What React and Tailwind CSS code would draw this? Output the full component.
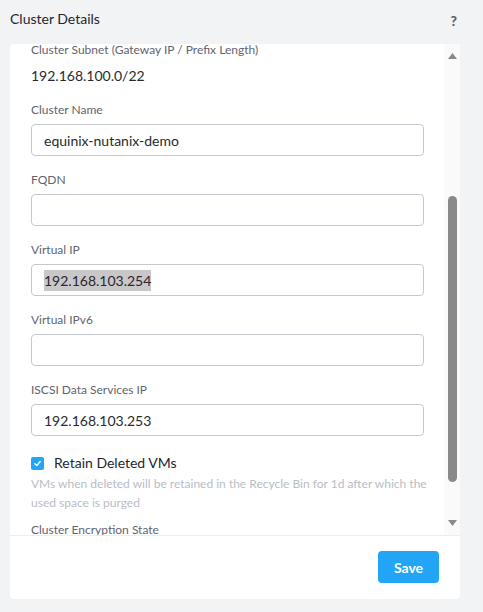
import React from "react";

const font = { fontFamily: "Lato, 'Open Sans', sans-serif" };

function Field({ label, value, selected }) {
  return (
    <div className="flex flex-col">
      <div className="h-[16px] leading-[16px] text-[12px] text-[#5f6470]">{label}</div>
      <div className="mt-[6px] h-[32px] w-[393px] rounded-[4px] border border-[#c5c8cf] bg-white pl-[12px] flex items-center text-[14px] text-[#262a31]">
        {value ? (
          selected ? (
            <span className="bg-[#c8c8c8] text-[#2e2433]">{value}</span>
          ) : (
            <span>{value}</span>
          )
        ) : null}
      </div>
    </div>
  );
}

export default function App() {
  return (
    <div className="w-[483px] h-[612px] bg-[#f2f3f5] pl-[10px] overflow-hidden" style={font}>
      <div className="w-[450px] h-[44px] flex items-start justify-between">
        <div className="mt-[10px] text-[14px] leading-[18px] text-[#22262e]">Cluster Details</div>
        <div className="mt-[13px] mr-[3px] text-[14px] leading-[16px] font-black text-[#5c616b]">?</div>
      </div>
      <div className="w-[450px] h-[555px] bg-white rounded-[4px] flex flex-col">
        <div className="h-[491px] flex">
          <div className="flex-1 overflow-hidden pl-[21px]">
            <div className="-mt-[2px] flex flex-col">
              <div className="h-[16px] leading-[16px] text-[12px] text-[#5f6470]">
                Cluster Subnet (Gateway IP / Prefix Length)
              </div>
              <div className="mt-[8px] h-[20px] leading-[20px] text-[14px] text-[#262a31]">192.168.100.0/22</div>
              <div className="mt-[16px] flex flex-col gap-[16px]">
                <Field label="Cluster Name" value="equinix-nutanix-demo" />
                <Field label="FQDN" />
                <Field label="Virtual IP" value="192.168.103.254" selected />
                <Field label="Virtual IPv6" />
                <Field label="ISCSI Data Services IP" value="192.168.103.253" />
              </div>
              <div className="mt-[18px] flex items-center gap-[10px]">
                <div className="w-[13px] h-[13px] rounded-[2px] bg-[#22a5f7] flex items-center justify-center">
                  <svg width="9" height="9" viewBox="0 0 10 10">
                    <path d="M2 5.2 L4.2 7.3 L8 2.8" fill="none" stroke="white" strokeWidth="1.6" strokeLinecap="round" strokeLinejoin="round" />
                  </svg>
                </div>
                <div className="text-[14px] leading-[18px] text-[#22262e]">Retain Deleted VMs</div>
              </div>
              <div className="mt-[2px] w-[400px] text-[12px] leading-[19px] text-[#b9bdc6]">
                VMs when deleted will be retained in the Recycle Bin for 1d after which the used space is purged
              </div>
              <div className="mt-[10px] h-[16px] leading-[16px] text-[12px] text-[#5f6470]">Cluster Encryption State</div>
            </div>
          </div>
          <div className="w-[16px] bg-[#fafafa] flex flex-col items-center">
            <svg className="mt-[9px]" width="9" height="6" viewBox="0 0 9 6">
              <path d="M4.5 0 L9 6 L0 6 Z" fill="#8a8a8a" />
            </svg>
            <div className="mt-[137px] w-[9px] h-[286px] rounded-full bg-[#8a8a8a]" />
            <svg className="mt-[38px]" width="9" height="6" viewBox="0 0 9 6">
              <path d="M0 0 L9 0 L4.5 6 Z" fill="#8a8a8a" />
            </svg>
          </div>
        </div>
        <div className="border-t border-[#ebedf0] flex justify-end pr-[21px] pt-[15px]">
          <button className="w-[61px] h-[32px] rounded-[4px] bg-[#22a5f7] text-white text-[14px] font-bold">
            Save
          </button>
        </div>
      </div>
    </div>
  );
}
